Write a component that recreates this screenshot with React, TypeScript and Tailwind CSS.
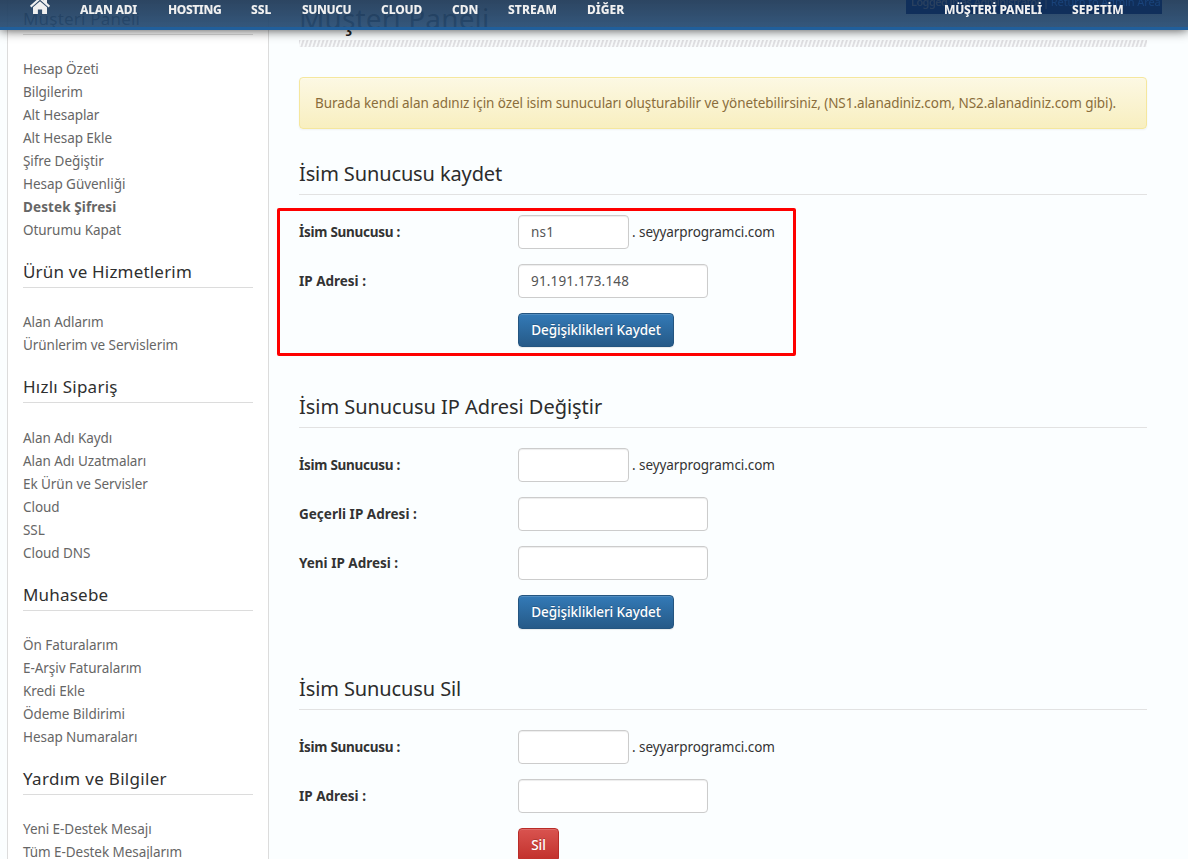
import type { ReactNode } from 'react';

type NavItem = { label: string; width: string };

const mainNav: NavItem[] = [
  { label: 'ALAN ADI', width: 'w-[88px] tracking-[-0.26px]' },
  { label: 'HOSTING', width: 'w-[83px] tracking-[-0.4px]' },
  { label: 'SSL', width: 'w-[51px]' },
  { label: 'SUNUCU', width: 'w-[79px] tracking-[-0.4px]' },
  { label: 'CLOUD', width: 'w-[71px] tracking-[-0.1px]' },
  { label: 'CDN', width: 'w-[56px]' },
  { label: 'STREAM', width: 'w-[79px] tracking-[0.1px]' },
  { label: 'DİĞER', width: 'w-[60px]' },
];

type MenuGroup = {
  title: string;
  titleStyle: string;
  items: { label: string; bold?: boolean }[];
};

const menu: MenuGroup[] = [
  {
    title: 'Müşteri Paneli',
    titleStyle: 'h-[35px] tracking-[0.2px]',
    items: [
      { label: 'Hesap Özeti' },
      { label: 'Bilgilerim' },
      { label: 'Alt Hesaplar' },
      { label: 'Alt Hesap Ekle' },
      { label: 'Şifre Değiştir' },
      { label: 'Hesap Güvenliği' },
      { label: 'Destek Şifresi', bold: true },
      { label: 'Oturumu Kapat' },
    ],
  },
  {
    title: 'Ürün ve Hizmetlerim',
    titleStyle: 'h-[46px] tracking-[0.19px]',
    items: [{ label: 'Alan Adlarım' }, { label: 'Ürünlerim ve Servislerim' }],
  },
  {
    title: 'Hızlı Sipariş',
    titleStyle: 'h-[46px] mb-px tracking-[0.25px]',
    items: [
      { label: 'Alan Adı Kaydı' },
      { label: 'Alan Adı Uzatmaları' },
      { label: 'Ek Ürün ve Servisler' },
      { label: 'Cloud' },
      { label: 'SSL' },
      { label: 'Cloud DNS' },
    ],
  },
  {
    title: 'Muhasebe',
    titleStyle: 'h-[46px] tracking-[0.2px]',
    items: [
      { label: 'Ön Faturalarım' },
      { label: 'E-Arşiv Faturalarım' },
      { label: 'Kredi Ekle' },
      { label: 'Ödeme Bildirimi' },
      { label: 'Hesap Numaraları' },
    ],
  },
  {
    title: 'Yardım ve Bilgiler',
    titleStyle: 'h-[46px] tracking-[0.3px]',
    items: [{ label: 'Yeni E-Destek Mesajı' }, { label: 'Tüm E-Destek Mesajlarım' }],
  },
];

function HomeIcon() {
  return (
    <svg className="-mt-[9px] h-5 w-5" viewBox="0 0 20 20" fill="#f0f0f0">
      <path d="M10 2 0 10.8l1.3 1.6L10 4.8l8.7 7.6 1.3-1.6-3-2.7V2.5h-3v3z" />
      <path d="M10 6.2 3 12.3V19h4.9v-4.6h4.2V19H17v-6.7z" />
    </svg>
  );
}

function Header() {
  return (
    <header className="fixed inset-x-0 top-0 z-20 h-[30px] border-b-[3px] border-[#205f9c] bg-linear-to-b from-[#213b59]/95 to-[#264d75]/93 bg-origin-border shadow-[0_0_12px_rgba(0,0,0,0.75)]">
      <div className="absolute top-0 left-[906px] h-[14px] w-[256px] bg-[#102f5b] pl-[5px] text-[11px] leading-[4px] whitespace-nowrap text-[#29405f]">
        <span className="font-semibold tracking-[-0.6px]">Logged in as Administrator | </span>
        <span className="tracking-[-0.1px] text-[#19437a]">Return to Admin Area</span>
      </div>
      <nav className="relative flex h-[19px] items-center pl-[30px] text-[12px] leading-[19px] font-extrabold text-[#f0f0f0]">
        <span className="w-[50px]">
          <HomeIcon />
        </span>
        {mainNav.map((item) => (
          <span key={item.label} className={`whitespace-nowrap ${item.width}`}>
            {item.label}
          </span>
        ))}
        <span className="ml-[297px] w-[128px] tracking-[-0.2px] whitespace-nowrap">MÜŞTERİ PANELİ</span>
        <span className="tracking-[0.1px]">SEPETİM</span>
      </nav>
    </header>
  );
}

function Sidebar() {
  return (
    <aside className="ml-[7px] h-[859px] w-[262px] shrink-0 overflow-hidden border-x border-[#dcdcdc] bg-white px-[15px]">
      {menu.map((group) => (
        <section key={group.title}>
          <h3
            className={`flex items-end border-b border-[#dcdcdc] pb-[3px] text-[17px] leading-[25px] text-[#2f2f2f] ${group.titleStyle}`}
          >
            {group.title}
          </h3>
          <ul className="pt-[23px] text-[13.5px] leading-[23px] text-[#666]">
            {group.items.map((item) => (
              <li
                key={item.label}
                className={`whitespace-nowrap ${item.bold ? 'font-bold tracking-[0.11px]' : 'tracking-[-0.06px]'}`}
              >
                {item.label}
              </li>
            ))}
          </ul>
        </section>
      ))}
    </aside>
  );
}

function Row({ label, labelStyle, children }: { label?: string; labelStyle?: string; children: ReactNode }) {
  return (
    <div className="flex h-[34px] items-center">
      <label className={`w-[219px] shrink-0 font-bold ${labelStyle ?? 'tracking-[-0.27px]'}`}>{label}</label>
      {children}
    </div>
  );
}

function Field({ value = '', small = false }: { value?: string; small?: boolean }) {
  return (
    <input
      type="text"
      defaultValue={value}
      className={`h-[34px] rounded-[4px] border border-[#ccc] bg-white px-3 tracking-[0.16px] text-[#555] shadow-[inset_0_1px_1px_rgba(0,0,0,0.075)] ${small ? 'w-[111px]' : 'w-[190px]'}`}
    />
  );
}

function NameServerRow({ value }: { value?: string }) {
  return (
    <Row label="İsim Sunucusu :">
      <Field small value={value} />
      <span className="ml-[3px] tracking-[-0.07px]">. seyyarprogramci.com</span>
    </Row>
  );
}

function SaveButton() {
  return (
    <button className="h-[34px] w-[156px] rounded-[4px] border border-[#245580] bg-linear-to-b from-[#337ab7] to-[#265a88] font-medium tracking-[-0.08px] whitespace-nowrap text-white shadow-[inset_0_1px_0_rgba(255,255,255,0.15),0_1px_1px_rgba(0,0,0,0.075)] [text-shadow:0_-1px_0_rgba(0,0,0,0.2)]">
      Değişiklikleri Kaydet
    </button>
  );
}

function FormSection({ title, titleStyle, children }: { title: string; titleStyle: string; children: ReactNode }) {
  return (
    <section className="mb-[47px]">
      <h2
        className={`flex h-[34px] items-start border-b border-[#e2e2e2] text-[20px] leading-[25px] text-[#2c2c2c] ${titleStyle}`}
      >
        {title}
      </h2>
      <div className="flex flex-col gap-[15px] pt-5">{children}</div>
    </section>
  );
}

export default function App() {
  return (
    <div className="relative flex h-[859px] w-[1188px] overflow-hidden bg-[#fbfeff] font-['Noto_Sans',sans-serif] text-[13.5px] leading-5 text-[#333]">
      <Header />
      <Sidebar />
      <main className="ml-[30px] w-[848px] shrink-0">
        <h1 className="h-10 text-[28px] leading-[36px] tracking-[0.15px] text-[#222]">Müşteri Paneli</h1>
        <div className="h-[7px] bg-[repeating-linear-gradient(108deg,#dfdfe2_0px,#dfdfe2_1px,#f8fafb_2px,#f8fafb_3px,#dfdfe2_3.8px)]" />
        <div className="mt-[30px] flex h-[52px] items-center rounded-[4px] border border-[#f5e79e] bg-linear-to-b from-[#fcf8e3] to-[#f8efc0] px-[15px] tracking-[-0.063px] whitespace-nowrap text-[#8a6d3b] shadow-[inset_0_1px_0_rgba(255,255,255,0.25),0_1px_2px_rgba(0,0,0,0.05)]">
          Burada kendi alan adınız için özel isim sunucuları oluşturabilir ve yönetebilirsiniz, (NS1.alanadiniz.com,
          NS2.alanadiniz.com gibi).
        </div>
        <div className="pt-8">
          <FormSection title="İsim Sunucusu kaydet" titleStyle="tracking-[-0.12px]">
            <NameServerRow value="ns1" />
            <Row label="IP Adresi :" labelStyle="tracking-normal">
              <Field value="91.191.173.148" />
            </Row>
            <Row>
              <SaveButton />
            </Row>
          </FormSection>
          <FormSection title="İsim Sunucusu IP Adresi Değiştir" titleStyle="tracking-[-0.04px]">
            <NameServerRow />
            <Row label="Geçerli IP Adresi :" labelStyle="tracking-[0.02px]">
              <Field />
            </Row>
            <Row label="Yeni IP Adresi :" labelStyle="tracking-normal">
              <Field />
            </Row>
            <Row>
              <SaveButton />
            </Row>
          </FormSection>
          <FormSection title="İsim Sunucusu Sil" titleStyle="tracking-[-0.1px]">
            <NameServerRow />
            <Row label="IP Adresi :" labelStyle="tracking-normal">
              <Field />
            </Row>
            <Row>
              <button className="h-[34px] w-[41px] rounded-[4px] border border-[#b92c28] bg-linear-to-b from-[#d9534f] to-[#c12e2a] font-medium text-white shadow-[inset_0_1px_0_rgba(255,255,255,0.15)] [text-shadow:0_-1px_0_rgba(0,0,0,0.2)]">
                Sil
              </button>
            </Row>
          </FormSection>
        </div>
      </main>
      <div className="pointer-events-none absolute top-[208px] left-[277px] h-[148px] w-[519px] rounded-[2px] border-[3px] border-[#fe0000]" />
    </div>
  );
}
